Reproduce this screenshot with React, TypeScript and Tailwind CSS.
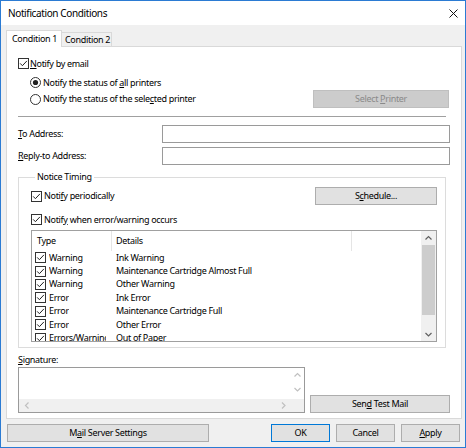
import React from "react";

const FONT = '"Noto Sans", "Open Sans", sans-serif';

function Check({ checked = true }: { checked?: boolean }) {
  return (
    <svg width="11" height="11" viewBox="0 0 11 11" className="shrink-0 block">
      <rect x="0.5" y="0.5" width="10" height="10" fill="white" stroke="#333333" />
      {checked && <path d="M2.2 5.4 L4.4 7.7 L8.9 2.9" fill="none" stroke="#222222" strokeWidth="1" />}
    </svg>
  );
}

function Radio({ checked }: { checked?: boolean }) {
  return (
    <svg width="11" height="11" viewBox="0 0 11 11" className="shrink-0 block">
      <circle cx="5.5" cy="5.5" r="5" fill="white" stroke="#333333" />
      {checked && <circle cx="5.5" cy="5.5" r="2.6" fill="#222222" />}
    </svg>
  );
}

function Btn({ children, className = "" }: { children: React.ReactNode; className?: string }) {
  return (
    <div className={`h-[18px] border border-[#adadad] bg-[#e1e1e1] flex items-center justify-center leading-[12px] ${className}`}>
      {children}
    </div>
  );
}

function Chevron({ dir, color = "#606060" }: { dir: "up" | "down" | "left" | "right"; color?: string }) {
  const d =
    dir === "up" ? "M1.5 5.5 L4.5 2.5 L7.5 5.5" :
    dir === "down" ? "M1.5 3 L4.5 6 L7.5 3" :
    dir === "left" ? "M5.5 1.5 L2.5 4.5 L5.5 7.5" : "M3 1.5 L6 4.5 L3 7.5";
  return (
    <svg width="9" height="9" viewBox="0 0 9 9" className="block">
      <path d={d} fill="none" stroke={color} strokeWidth="1.2" />
    </svg>
  );
}

const rows: [string, string][] = [
  ["Warning", "Ink Warning"],
  ["Warning", "Maintenance Cartridge Almost Full"],
  ["Warning", "Other Warning"],
  ["Error", "Ink Error"],
  ["Error", "Maintenance Cartridge Full"],
  ["Error", "Other Error"],
  ["Errors/Warning", "Out of Paper"],
];

export default function App() {
  return (
    <div
      className="w-[466px] h-[448px] border border-[#2b7bd3] bg-[#f0f0f0] flex flex-col text-[9px] leading-[12px] tracking-[-0.32px] text-black overflow-hidden"
      style={{ fontFamily: FONT }}
    >
      {/* Title bar */}
      <div className="h-[24px] bg-white flex items-center justify-between pl-[7px] pr-[7px] shrink-0">
        <span className="text-[10px] tracking-[-0.38px]">Notification Conditions</span>
        <svg width="9" height="9" viewBox="0 0 9 9" className="block">
          <path d="M0.5 0.5 L8.5 8.5 M8.5 0.5 L0.5 8.5" stroke="#111" strokeWidth="1" />
        </svg>
      </div>

      <div className="flex flex-col pl-[5px] pr-[3px] flex-1">
        {/* Tabs */}
        <div className="flex items-end h-[16px] mt-[5px]">
          <div className="h-[17px] w-[56px] -mb-px relative z-10 bg-white border border-b-0 border-[#d9d9d9] pl-[5px] flex items-center">
            Condition 1
          </div>
          <div className="h-[14px] w-[50px] border-t border-r border-[#d9d9d9] pl-[3px] flex items-center">Condition 2</div>
        </div>

        {/* Panel */}
        <div className="h-[373px] border border-[#d9d9d9] bg-white flex flex-col pl-[11px] pr-[11px]">
          <div className="mt-[11px] h-[11px] flex items-center gap-[1px]">
            <Check />
            <span><u>N</u>otify by email</span>
          </div>
          <div className="mt-[8px] ml-[12px] h-[11px] flex items-center gap-[2px]">
            <Radio checked />
            <span>Notify the status of <u>a</u>ll printers</span>
          </div>
          <div className="mt-[2px] h-[18px] flex items-center justify-between">
            <div className="ml-[12px] flex items-center gap-[2px]">
              <Radio />
              <span>Notify the status of the sele<u>c</u>ted printer</span>
            </div>
            <div className="w-[136px] mr-[1px] h-[18px] border border-[#bfbfbf] bg-[#cccccc] text-[#8a8a8a] flex items-center justify-center">
              <span>Select <u>P</u>rinter</span>
            </div>
          </div>
          <div className="mt-[8px] mr-[4px] h-px bg-[#a0a0a0]" />

          <div className="mt-[8px] h-[18px] flex items-center">
            <span className="w-[144px] shrink-0"><u>T</u>o Address:</span>
            <div className="flex-1 h-[18px] border border-[#9a9a9a] bg-white" />
          </div>
          <div className="mt-[4px] h-[18px] flex items-center">
            <span className="w-[144px] shrink-0"><u>R</u>eply-to Address:</span>
            <div className="flex-1 h-[18px] border border-[#9a9a9a] bg-white" />
          </div>

          {/* Notice Timing */}
          <fieldset className="mt-[6px] mr-[4px] border border-[#dcdcdc] pb-[5px] pl-[12px] pr-[8px] flex flex-col">
            <legend className="ml-[4px] px-[2px] leading-[12px]">Notice Timing</legend>
            <div className="mt-[4px] h-[18px] flex items-center justify-between">
              <div className="flex items-center gap-[2px]">
                <Check />
                <span>Noti<u>f</u>y periodically</span>
              </div>
              <Btn className="w-[122px]">
                <span>S<u>c</u>hedule...</span>
              </Btn>
            </div>
            <div className="mt-[9px] h-[11px] flex items-center gap-[2px]">
              <Check />
              <span>Notif<u>y</u> when error/warning occurs</span>
            </div>

            <div className="mt-[5px] h-[112px] border border-[#a0a0a0] bg-white flex overflow-hidden">
              <div className="flex-1 flex flex-col overflow-hidden">
                <div className="h-[20px] shrink-0 flex">
                  <div className="w-[80px] border-r border-[#e5e5e5] pl-[5px] flex items-center">Type</div>
                  <div className="w-[240px] border-r border-[#e5e5e5] pl-[4px] flex items-center">Details</div>
                </div>
                {rows.map(([t, d], i) => (
                  <div key={i} className="h-[13.4px] shrink-0 flex items-center">
                    <div className="w-[80px] pl-[3px] pr-[6px] flex items-center gap-[3px] overflow-hidden whitespace-nowrap">
                      <Check />
                      <span className="overflow-hidden">{t}</span>
                    </div>
                    <div className="pl-[4px] whitespace-nowrap">{d}</div>
                  </div>
                ))}
              </div>
              <div className="w-[15px] shrink-0 bg-[#f0f0f0] flex flex-col items-center">
                <div className="h-[14px] flex items-center justify-center">
                  <Chevron dir="up" />
                </div>
                <div className="w-[13px] h-[70px] bg-[#cdcdcd]" />
                <div className="flex-1" />
                <div className="h-[14px] flex items-center justify-center">
                  <Chevron dir="down" />
                </div>
              </div>
            </div>
          </fieldset>

          <div className="mt-[6px] h-[12px]">
            <u>S</u>ignature:
          </div>
          <div className="mt-px flex items-end">
            <div className="w-[287px] h-[46px] border border-[#9a9a9a] bg-white flex flex-col">
              <div className="flex-1 flex">
                <div className="flex-1" />
                <div className="w-[13px] flex flex-col items-center pt-[3px] gap-[5px]">
                  <Chevron dir="up" color="#c0c0c0" />
                  <Chevron dir="down" color="#c0c0c0" />
                </div>
              </div>
              <div className="h-[13px] flex">
                <div className="flex-1 bg-[#f0f0f0] flex items-center justify-between pl-[4px] pr-[3px]">
                  <Chevron dir="left" color="#c0c0c0" />
                  <Chevron dir="right" color="#c0c0c0" />
                </div>
                <div className="w-[13px] bg-[#f0f0f0]" />
              </div>
            </div>
            <Btn className="ml-[5px] w-[140px] h-[17px]">
              <span>Sen<u>d</u> Test Mail</span>
            </Btn>
          </div>
        </div>

        {/* Bottom buttons */}
        <div className="mt-[5px] h-[18px] flex items-center">
          <Btn className="ml-[1px] w-[202px]">
            <span>M<u>a</u>il Server Settings</span>
          </Btn>
          <div className="ml-auto mr-[2px] flex gap-[6px]">
            <div className="w-[59px] h-[18px] border border-[#0078d7] bg-[#e1e1e1] flex items-center justify-center">OK</div>
            <Btn className="w-[59px]">Cancel</Btn>
            <Btn className="w-[59px]">
              <span><u>A</u>pply</span>
            </Btn>
          </div>
        </div>
      </div>
    </div>
  );
}
